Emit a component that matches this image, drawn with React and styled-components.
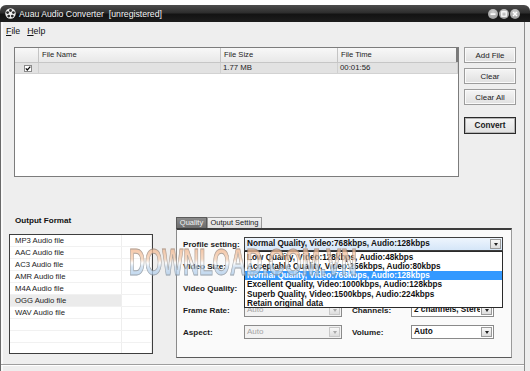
import React from 'react';
import styled, { createGlobalStyle } from 'styled-components';

const FONT = `"Liberation Sans", Arial, sans-serif`;

const Global = createGlobalStyle`
  html, body { margin: 0; padding: 0; background: #fff; }
  body { font-family: ${FONT}; width: 530px; height: 371px; overflow: hidden; }
  * { box-sizing: border-box; }
`;

const Desktop = styled.div`
  width: 530px;
  height: 371px;
  background: #fff;
  padding-top: 5px;
  position: relative;
  overflow: hidden;
`;

const Window = styled.div`
  width: 530px;
  height: 366px;
  display: flex;
  flex-direction: column;
  background: #eeeeee;
  border-radius: 6px 6px 0 0;
  overflow: hidden;
`;

const TitleBar = styled.div`
  height: 17px;
  flex: none;
  display: flex;
  align-items: center;
  gap: 3px;
  padding: 0 10px 0 5px;
  background: linear-gradient(#4c4c4c, #2e2e2e 45%, #131313 55%, #1d1d1d);
  color: #f4f4f4;
  font-size: 8.7px;
`;

const TitleText = styled.span`
  white-space: pre;
  flex: 1;
`;

const TitleButtons = styled.div`
  display: flex;
  gap: 1px;
`;

const CircleBtn = styled.span`
  width: 10px;
  height: 10px;
  border-radius: 50%;
  background: radial-gradient(circle at 50% 30%, #d0d0d0, #8e8e8e);
  display: flex;
  align-items: center;
  justify-content: center;
`;

const Frame = styled.div`
  flex: 1;
  display: flex;
  flex-direction: column;
  margin-right: 5px;
  border-left: 1px solid #6a6a6a;
  border-right: 1px solid #8c8c8c;
  box-shadow: inset 2px 0 #fafafa;
  min-height: 0;
`;

const MenuBar = styled.div`
  height: 18px;
  flex: none;
  display: flex;
  align-items: center;
  gap: 7px;
  padding-left: 5px;
  font-size: 8.8px;
  color: #111;
`;

const MenuItem = styled.span`
  & > u { text-decoration: underline; }
`;

const Content = styled.div`
  flex: 1;
  display: flex;
  flex-direction: column;
  padding: 7px 8px 0 8px;
  min-height: 0;
`;

const TopRow = styled.div`
  display: flex;
  gap: 5px;
  margin-left: 5px;
  height: 130px;
  flex: none;
`;

const FileList = styled.div`
  flex: 1;
  border: 1px solid #7c7c7c;
  background: #fff;
  display: flex;
  flex-direction: column;
`;

const Columns = `24px 182px 117px 1fr`;

const HeaderRow = styled.div`
  display: grid;
  grid-template-columns: ${Columns};
  height: 15px;
  background: linear-gradient(#f8f8f8, #e8e8e8);
  border-bottom: 1px solid #c6c6c6;
`;

const HeaderCell = styled.div`
  font-size: 7.6px;
  color: #222;
  padding-left: 3px;
  line-height: 14px;
  border-right: ${p => (p.$last ? '2px solid #7a7a7a' : '1px solid #c4c4c4')};
  white-space: nowrap;
`;

const DataRow = styled.div`
  display: grid;
  grid-template-columns: ${Columns};
  height: 11px;
  background: #e2e2e2;
  border-bottom: 1px solid #d2d2d2;
`;

const DataCell = styled.div`
  font-size: 7.8px;
  color: #222;
  padding-left: 2px;
  line-height: 10px;
  border-right: 1px solid #d0d0d0;
  display: flex;
  align-items: center;
  justify-content: ${p => (p.$center ? 'center' : 'flex-start')};
  white-space: nowrap;
`;

const ButtonStack = styled.div`
  width: 52px;
  display: flex;
  flex-direction: column;
  gap: 5px;
`;

const Button = styled.div`
  height: ${p => (p.$default ? '17px' : '16px')};
  margin-top: ${p => (p.$default ? '7px' : '0')};
  display: flex;
  align-items: center;
  justify-content: center;
  font-size: ${p => (p.$default ? '8.2px' : '7.9px')};
  font-weight: ${p => (p.$default ? 'bold' : 'normal')};
  color: #1a1a1a;
  background: linear-gradient(#f5f5f5, #e0e0e0);
  border: 1px solid ${p => (p.$default ? '#2a2a2a' : '#9c9c9c')};
  box-shadow: ${p => (p.$default ? 'inset 0 0 0 1px #b4b4b4' : 'inset 0 0 0 1px #fafafa')};
`;

const BottomRow = styled.div`
  display: flex;
  gap: 23px;
  margin-top: 38px;
  flex: none;
`;

const FormatColumn = styled.div`
  width: 144px;
  display: flex;
  flex-direction: column;
`;

const SectionTitle = styled.div`
  font-size: 8.1px;
  font-weight: bold;
  line-height: 12px;
  height: 12px;
  padding-left: 6px;
  margin-bottom: 7px;
  color: #111;
`;

const FormatList = styled.div`
  height: 120px;
  border: 1px solid #3e3e3e;
  background: #fff;
  overflow: hidden;
`;

const FormatRow = styled.div`
  display: grid;
  grid-template-columns: 112px 1fr;
  height: 12px;
  border-bottom: 1px solid #f1f1f1;
`;

const FormatCell = styled.div`
  font-size: 7.7px;
  line-height: 11px;
  padding-left: 5px;
  color: #222;
  background: ${p => (p.$selected ? '#ebebeb' : 'transparent')};
  border-right: 1px solid #eeeeee;
  white-space: nowrap;
`;

const TabArea = styled.div`
  width: 336px;
  padding-top: 2px;
  display: flex;
  flex-direction: column;
`;

const TabStrip = styled.div`
  display: flex;
  height: 11px;
`;

const Tab = styled.div`
  width: ${p => p.$w}px;
  text-align: center;
  font-size: 7.5px;
  line-height: 10px;
  color: ${p => (p.$active ? '#f2f2f2' : '#1a1a1a')};
  background: ${p => (p.$active ? 'linear-gradient(#8a8a8a, #6c6c6c)' : 'linear-gradient(#f2f2f2, #e0e0e0)')};
  border: 1px solid ${p => (p.$active ? '#5a5a5a' : '#9a9a9a')};
  border-bottom: none;
  white-space: nowrap;
`;

const Panel = styled.div`
  height: 130px;
  background: #fafafa;
  border-top: 2px solid #3c3c3c;
  border-left: 1px solid #8a8a8a;
  border-right: 1px solid #9a9a9a;
  border-bottom: 1px solid #5a5a5a;
`;

const Form = styled.div`
  display: grid;
  grid-template-columns: 61px 98px 10px 59px 83px 9px;
  grid-template-rows: repeat(5, 14px);
  row-gap: 8px;
  padding: 7px 0 0 6px;
  align-items: center;
`;

const Label = styled.div`
  grid-column: ${p => p.$col};
  grid-row: ${p => p.$row};
  font-size: 8.1px;
  font-weight: bold;
  color: #1a1a1a;
  white-space: nowrap;
`;

const SelectBox = styled.div`
  grid-column: ${p => p.$col};
  grid-row: ${p => p.$row};
  height: 14px;
  display: flex;
  position: relative;
  z-index: ${p => (p.$open ? 5 : 1)};
  border: 1px solid ${p => (p.$focused ? '#3e3e3e' : '#8a8a8a')};
  background: ${p =>
    p.$disabled ? '#f2f2f2' : p.$focused ? 'linear-gradient(#eef5fd, #d5e6f8)' : '#ffffff'};
`;

const SelectText = styled.div`
  flex: 1;
  padding-left: 2px;
  font-size: ${p => (p.$bold ? '8.2px' : '8px')};
  font-weight: ${p => (p.$bold ? 'bold' : 'normal')};
  color: ${p => (p.$disabled ? '#a4a4a4' : '#111')};
  line-height: 12px;
  white-space: nowrap;
  overflow: hidden;
`;

const Arrow = styled.div`
  width: 11px;
  margin: 1px;
  border: 1px solid ${p => (p.$disabled ? '#c8c8c8' : '#9a9a9a')};
  background: linear-gradient(#f8f8f8, #dcdcdc);
  display: flex;
  align-items: center;
  justify-content: center;
  &::after {
    content: '';
    border-left: 2.5px solid transparent;
    border-right: 2.5px solid transparent;
    border-top: 3px solid ${p => (p.$disabled ? '#a8a8a8' : '#222')};
  }
`;

const DropList = styled.div`
  position: absolute;
  left: -1px;
  right: -1px;
  top: 13px;
  height: 57px;
  background: #fff;
  border: 1px solid #2a2a2a;
  padding-top: 1px;
`;

const DropItem = styled.div`
  height: 9.15px;
  line-height: 9px;
  font-size: 8.2px;
  font-weight: bold;
  padding-left: 2px;
  white-space: nowrap;
  overflow: hidden;
  color: ${p => (p.$selected ? '#fff' : '#111')};
  background: ${p => (p.$selected ? '#3399ff' : 'transparent')};
`;

const StatusBar = styled.div`
  margin-top: auto;
  height: 7px;
  flex: none;
  margin-left: -8px;
  margin-right: -8px;
  border-top: 1px solid #9e9e9e;
  box-shadow: inset 0 1px #ffffff;
`;

const Watermark = styled.div`
  position: absolute;
  left: 129px;
  top: 243px;
  font-family: "Liberation Sans", Arial, sans-serif;
  font-size: 37px;
  font-weight: bold;
  line-height: 40px;
  white-space: nowrap;
  transform: scaleX(0.6);
  transform-origin: left top;
  background: linear-gradient(#f0a878 0%, #f6cfb2 40%, #ffffff 50%, #c8dcf0 60%, #94bde6 100%);
  -webkit-background-clip: text;
  background-clip: text;
  color: transparent;
  -webkit-text-stroke: 1px rgba(110, 110, 110, 0.7);
  opacity: 0.75;
  z-index: 20;
  pointer-events: none;
`;

const Reel = () => (
  <svg width="11" height="11" viewBox="0 0 11 11">
    <circle cx="5.5" cy="5.5" r="5.2" fill="#f0f0f0" />
    <circle cx="5.5" cy="2.5" r="1.4" fill="#2a2a2a" />
    <circle cx="8.4" cy="4.6" r="1.4" fill="#2a2a2a" />
    <circle cx="7.3" cy="8.1" r="1.4" fill="#2a2a2a" />
    <circle cx="3.7" cy="8.1" r="1.4" fill="#2a2a2a" />
    <circle cx="2.6" cy="4.6" r="1.4" fill="#2a2a2a" />
  </svg>
);

const Check = () => (
  <svg width="8" height="7" viewBox="0 0 8 7">
    <rect x="0.5" y="0.5" width="7" height="6" fill="#fff" stroke="#8a8a8a" />
    <path d="M1.8 3.4 L3.3 5 L6.3 1.6" fill="none" stroke="#111" strokeWidth="1.3" />
  </svg>
);

const MinIcon = () => (
  <svg width="6" height="6" viewBox="0 0 6 6"><rect x="0.5" y="2.3" width="5" height="1.6" fill="#fff" /></svg>
);
const MaxIcon = () => (
  <svg width="6" height="6" viewBox="0 0 6 6"><rect x="0.8" y="0.8" width="4.4" height="4.4" fill="none" stroke="#fff" strokeWidth="1.2" /></svg>
);
const CloseIcon = () => (
  <svg width="6" height="6" viewBox="0 0 6 6"><path d="M1 1 L5 5 M5 1 L1 5" stroke="#fff" strokeWidth="1.4" /></svg>
);

const formats = ['MP3 Audio file', 'AAC Audio file', 'AC3 Audio file', 'AMR Audio file', 'M4A Audio file', 'OGG Audio file', 'WAV Audio file', '', '', ''];

const profiles = [
  'Low Quality, Video:128kbps, Audio:48kbps',
  'Acceptable Quality, Video:256kbps, Audio:80kbps',
  'Normal Quality, Video:768kbps, Audio:128kbps',
  'Excellent Quality, Video:1000kbps, Audio:128kbps',
  'Superb Quality, Video:1500kbps, Audio:224kbps',
  'Retain original data',
];

const Select = ({ col, row, text, bold, disabled, focused, open, children }) => (
  <SelectBox $col={col} $row={row} $disabled={disabled} $focused={focused} $open={open}>
    <SelectText $bold={bold} $disabled={disabled}>{text}</SelectText>
    <Arrow $disabled={disabled} />
    {children}
  </SelectBox>
);

export default function App() {
  return (
    <Desktop>
      <Global />
      <Window>
        <TitleBar>
          <Reel />
          <TitleText>Auau Audio Converter  [unregistered]</TitleText>
          <TitleButtons>
            <CircleBtn><MinIcon /></CircleBtn>
            <CircleBtn><MaxIcon /></CircleBtn>
            <CircleBtn><CloseIcon /></CircleBtn>
          </TitleButtons>
        </TitleBar>
        <Frame>
          <MenuBar>
            <MenuItem><u>F</u>ile</MenuItem>
            <MenuItem><u>H</u>elp</MenuItem>
          </MenuBar>
          <Content>
            <TopRow>
              <FileList>
                <HeaderRow>
                  <HeaderCell />
                  <HeaderCell>File Name</HeaderCell>
                  <HeaderCell>File Size</HeaderCell>
                  <HeaderCell $last>File Time</HeaderCell>
                </HeaderRow>
                <DataRow>
                  <DataCell $center><Check /></DataCell>
                  <DataCell />
                  <DataCell>1.77 MB</DataCell>
                  <DataCell>00:01:56</DataCell>
                </DataRow>
              </FileList>
              <ButtonStack>
                <Button>Add File</Button>
                <Button>Clear</Button>
                <Button>Clear All</Button>
                <Button $default>Convert</Button>
              </ButtonStack>
            </TopRow>
            <BottomRow>
              <FormatColumn>
                <SectionTitle>Output Format</SectionTitle>
                <FormatList>
                  {formats.map((f, i) => (
                    <FormatRow key={i}>
                      <FormatCell $selected={i === 5}>{f}</FormatCell>
                      <FormatCell />
                    </FormatRow>
                  ))}
                </FormatList>
              </FormatColumn>
              <TabArea>
                <TabStrip>
                  <Tab $active $w={31}>Quality</Tab>
                  <Tab $w={55}>Output Setting</Tab>
                </TabStrip>
                <Panel>
                  <Form>
                    <Label $col={1} $row={1}>Profile setting:</Label>
                    <Select col="2 / 7" row={1} text={profiles[2]} bold focused open>
                      <DropList>
                        {profiles.map((p, i) => (
                          <DropItem key={p} $selected={i === 2}>{p}</DropItem>
                        ))}
                      </DropList>
                    </Select>
                    <Label $col={1} $row={2}>Video Size:</Label>
                    <Select col={2} row={2} text="Auto" disabled />
                    <Label $col={4} $row={2}>Sample Rate:</Label>
                    <Select col={5} row={2} text="44100 Hz" bold />
                    <Label $col={1} $row={3}>Video Quality:</Label>
                    <Select col={2} row={3} text="Auto" disabled />
                    <Label $col={4} $row={3}>Bit Rate:</Label>
                    <Select col={5} row={3} text="128 kbps" bold />
                    <Label $col={1} $row={4}>Frame Rate:</Label>
                    <Select col={2} row={4} text="Auto" disabled />
                    <Label $col={4} $row={4}>Channels:</Label>
                    <Select col={5} row={4} text="2 channels, Stereo" bold />
                    <Label $col={1} $row={5}>Aspect:</Label>
                    <Select col={2} row={5} text="Auto" disabled />
                    <Label $col={4} $row={5}>Volume:</Label>
                    <Select col={5} row={5} text="Auto" bold />
                  </Form>
                </Panel>
              </TabArea>
            </BottomRow>
            <StatusBar />
          </Content>
        </Frame>
      </Window>
      <Watermark>DOWNLOAD.COM.VN</Watermark>
    </Desktop>
  );
}
